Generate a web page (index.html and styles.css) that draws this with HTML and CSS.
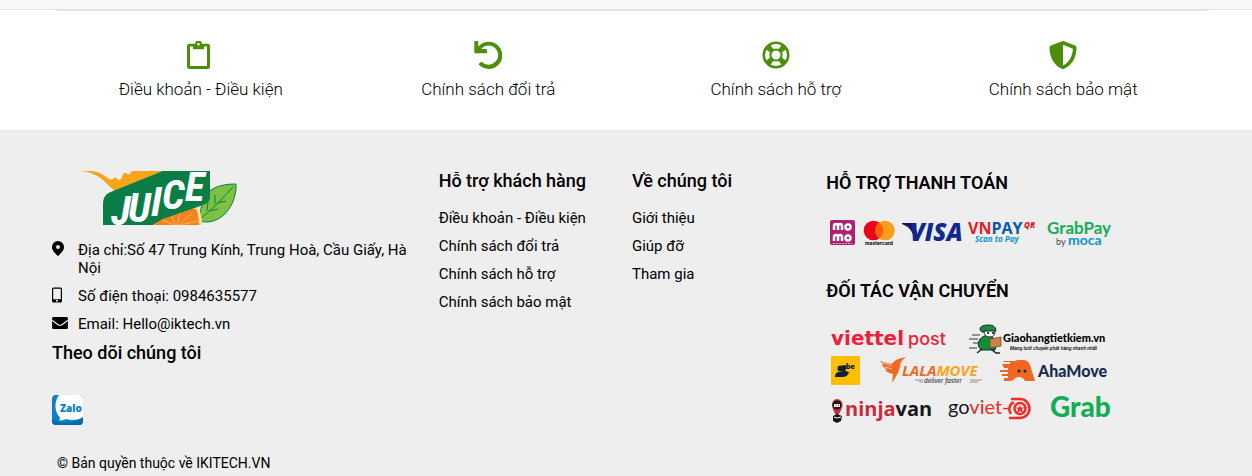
FILE: index.html
```html
<!DOCTYPE html>
<html lang="vi">
<head>
<meta charset="utf-8">
<meta name="viewport" content="width=device-width, initial-scale=1">
<title>Juice</title>
<link rel="stylesheet" href="styles.css">
</head>
<body>
<div class="page-end"></div>
<section class="policies">
  <div class="policy-list">
    <a class="policy" href="#terms">
      <svg class="policy-icon" viewBox="0 0 28 28" aria-hidden="true"><path fill-rule="evenodd" d="M2.500 2.800H8.200a3.300 3.300 0 0 1 6.600 0h5.700A2.500 2.500 0 0 1 23 5.300v20.200a2.500 2.500 0 0 1-2.500 2.500h-18A2.500 2.500 0 0 1 0 25.500V5.300a2.500 2.500 0 0 1 2.500-2.500ZM3 5.600V25h17V5.600h-3v1.900a.8.800 0 0 1-.8.800H6.800a.8.800 0 0 1-.8-.8V5.600ZM11.500 1.900a1.300 1.300 0 1 0 0 2.600 1.300 1.300 0 0 0 0-2.600Z"/></svg>
      <span>Điều khoản - Điều kiện</span>
    </a>
    <a class="policy" href="#returns">
      <svg class="policy-icon" viewBox="0 0 28 28" aria-hidden="true"><path d="M1 0h2.600a.7.700 0 0 1 .7.700v4.900A13.600 13.600 0 1 1 5 23.800a.7.700 0 0 1 0-1l1.900-1.900a.7.700 0 0 1 .9 0A9.600 9.600 0 1 0 7.100 8h5.200a.7.700 0 0 1 .7.700v2.900a.7.700 0 0 1-.7.700H1a.7.700 0 0 1-.7-.7V.7A.7.700 0 0 1 1 0Z"/></svg>
      <span>Chính sách đổi trả</span>
    </a>
    <a class="policy" href="#support">
      <svg class="policy-icon" viewBox="0 0 28 28" aria-hidden="true"><path fill-rule="evenodd" d="M14 .5a13.500 13.500 0 1 0 0 27 13.500 13.500 0 0 0 0-27ZM8.700 4.500a11 11 0 0 1 10.600 0l-2.600 3.400a8 8 0 0 0-5.400 0ZM4.500 8.700l3.400 2.600a8 8 0 0 0 0 5.400l-3.400 2.600a11 11 0 0 1 0-10.600ZM8.700 23.500l2.600-3.400a8 8 0 0 0 5.400 0l2.600 3.400a11 11 0 0 1-10.600 0ZM23.500 19.300l-3.400-2.600a8 8 0 0 0 0-5.400l3.400-2.600a11 11 0 0 1 0 10.600ZM14 9.500a4.500 4.500 0 1 1 0 9 4.500 4.500 0 0 1 0-9Z"/></svg>
      <span>Chính sách hỗ trợ</span>
    </a>
    <a class="policy" href="#privacy">
      <svg class="policy-icon" viewBox="0 0 28 28" aria-hidden="true"><path fill-rule="evenodd" d="M13 .2a2.600 2.600 0 0 1 2 0l11 4.400c1 .4 1.600 1.300 1.500 2.400 0 9.500-4.600 17.600-12.400 20.800a3 3 0 0 1-2.200 0C5.200 24.700.6 16.200.5 7 .5 5.900 1.100 5 2 4.600ZM14 3.800v20.600c5.900-2.800 9.600-9.100 9.900-16.600Z"/></svg>
      <span>Chính sách bảo mật</span>
    </a>
  </div>
</section>

<footer class="footer">
  <div class="footer-grid">
    <section class="company">
      <svg class="brand" viewBox="0 0 160 54" role="img" aria-label="Juice">
        <path fill="#f8a51b" d="M0 0c12 1 20 5 27 13l10 9L84 0H53c-2 0-3 5-6 3-3-3-4 0-6 5-3 3-5-3-7-1-3 3-5 1-9-2C19 1 14 0 10 0Z"/>
        <path fill="#7cc142" stroke="#0a8043" d="M119 50c3-16 1-37 37-37 1 21-15 43-37 37Z"/>
        <path fill="none" stroke="#0a8043" d="M118 49c12-8 22-19 35-33M127 40l1-9M135 33l0-9M129 40l9-2M137 32l9-2"/>
        <path fill="#f9e597" d="M70 54c8-12 31-21 48-18q4 7 4 18Z"/>
        <path fill="#f58220" d="M74 54c9-12 26-18 42-16q3 7 3 16Z"/>
        <path fill="none" stroke="#fcb64c" d="M94 54l-14-6M95 54l-4-12M97 54l4-15M99 54l13-12M100 54l18-4"/>
        <path fill="#0a7d47" d="M23 54V35c0-9 2-12 10-15L83 0h47v25c0 5-2 7-7 9L83 48q-6 3-10 6Z"/>
        <g class="brand-word"><text x="31" y="54">J</text><text x="48" y="51">U</text><text x="71" y="45">I</text><text x="82" y="38">C</text><text x="105" y="30">E</text></g>
      </svg>
      <ul class="contacts">
        <li><svg class="contact-icon" viewBox="0 0 16 16" aria-hidden="true"><path fill-rule="evenodd" d="M6 0a6 6 0 0 1 6 6c0 3-1.300 4-5.300 8.600a.9.900 0 0 1-1.400 0C1.300 10 0 9 0 6a6 6 0 0 1 6-6Zm0 4a2 2 0 1 0 0 4 2 2 0 0 0 0-4Z"/></svg><span>Địa chỉ:Số 47 Trung Kính, Trung Hoà, Cầu Giấy, Hà Nội</span></li>
        <li><svg class="contact-icon" viewBox="0 0 16 16" aria-hidden="true"><path fill-rule="evenodd" d="M1.500.5h7A1.500 1.500 0 0 1 10 2v12a1.500 1.500 0 0 1-1.500 1.500h-7A1.500 1.500 0 0 1 0 14V2A1.500 1.500 0 0 1 1.500.5Zm-.3 1.200v10.500h7.600V1.700ZM5 12.800a1 1 0 1 0 0 2 1 1 0 0 0 0-2Z"/></svg><span>Số điện thoại: 0984635577</span></li>
        <li><svg class="contact-icon" viewBox="0 0 16 16" aria-hidden="true"><path d="M1.500 2h13A1.500 1.500 0 0 1 16 3.500v1L9.500 9.300q-1.500 1-3 0L0 4.500v-1A1.500 1.500 0 0 1 1.500 2ZM0 6l5.800 4.300q2.200 1.400 4.400 0L16 6v6.500a1.500 1.500 0 0 1-1.500 1.500h-13A1.500 1.500 0 0 1 0 12.500Z"/></svg><span>Email: Hello@iktech.vn</span></li>
      </ul>
      <h2 class="title">Theo dõi chúng tôi</h2>
      <a class="zalo" href="#zalo" aria-label="Zalo">
        <svg viewBox="0 0 31 30" aria-hidden="true">
          <rect width="31" height="30" rx="4" fill="#0a80c8"/>
          <path fill="#056cad" d="M0 24c10 6 22 5 31-2v4a4 4 0 0 1-4 4H4a4 4 0 0 1-4-4Z"/>
          <path fill="#fff" d="M7 0C3 5 2 14 6 20c2 3 3 3 1 5 3 1 5 0 7-1 7 2 13 1 17-2V4a4 4 0 0 0-4-4Z"/>
          <text class="zalo-word" x="8" y="17">Zalo</text>
        </svg>
      </a>
    </section>

    <nav class="links" aria-labelledby="help-title">
      <h2 class="title" id="help-title">Hỗ trợ khách hàng</h2>
      <ul>
        <li><a href="#terms">Điều khoản - Điều kiện</a></li>
        <li><a href="#returns">Chính sách đổi trả</a></li>
        <li><a href="#support">Chính sách hỗ trợ</a></li>
        <li><a href="#privacy">Chính sách bảo mật</a></li>
      </ul>
    </nav>

    <nav class="links" aria-labelledby="about-title">
      <h2 class="title" id="about-title">Về chúng tôi</h2>
      <ul>
        <li><a href="#intro">Giới thiệu</a></li>
        <li><a href="#help">Giúp đỡ</a></li>
        <li><a href="#join">Tham gia</a></li>
      </ul>
    </nav>

    <section class="partners">
      <h2 class="title partner-title">HỖ TRỢ THANH TOÁN</h2>
      <svg class="partner-logos" viewBox="0 0 290 45" role="img" aria-label="MoMo, Mastercard, Visa, VNPAY QR, GrabPay by Moca">
        <rect x="4" y="10" width="25" height="25" rx="2" fill="#ae2070"/>
        <g fill="none" stroke="#fff" stroke-width="2.500"><path d="M8 20v-4q0-2 2-2t2 2v4m0-4q0-2 2-2t2 2v4M8 31v-4q0-2 2-2t2 2v4m0-4q0-2 2-2t2 2v4"/><circle cx="22" cy="17" r="2.500"/><circle cx="22" cy="28" r="2.500"/></g>
        <path stroke="#e5a9cb" stroke-dasharray="2 1" d="M7 33.500h19"/>
        <circle cx="47.500" cy="20.500" r="9.800" fill="#eb001b"/><circle cx="59" cy="20.500" r="9.800" fill="#f79e1b"/><path fill="#ff5f00" d="M53.200 12.600a9.800 9.800 0 0 1 0 15.800 9.800 9.800 0 0 1 0-15.800Z"/>
        <text class="lg-mastercard" x="39" y="35">mastercard</text>
        <path fill="#15195a" d="M76 13h9q3 0 4 3l3 10-3 5q-2-13-13-17Z"/>
        <text class="lg-visa" x="84" y="31">VISA</text>
        <text class="lg-vnpay" x="142" y="24"><tspan fill="#e31e2b">VN</tspan><tspan fill="#075ba8">PAY</tspan></text>
        <text class="lg-qr" x="198" y="18">QR</text>
        <text class="lg-scan" x="149" y="32">Scan to Pay</text>
        <text class="lg-grabpay" x="221" y="24">GrabPay</text>
        <text class="lg-by" x="230" y="35">by</text><text class="lg-moca" x="242" y="35">moca</text>
      </svg>
      <h2 class="title partner-title">ĐỐI TÁC VẬN CHUYỂN</h2>
      <svg class="partner-logos" viewBox="0 0 290 110" role="img" aria-label="Viettel Post, Giaohangtietkiem.vn, be, Lalamove, AhaMove, Ninja Van, Go-Viet, Grab">
        <text class="lg-viettel" x="5" y="25">viettel</text><text class="lg-post" x="82" y="25">post</text>

        <g><path stroke="#333" stroke-width="1" d="M146 15h8M143 19h9M147 23h7M143 28h8"/>
        <path fill="#168a3f" stroke="#173222" d="M154 10q-1-5 9-5 6 0 7 5l-1 2h-13Zm0 9q6-6 12-2l5 5-2 8h-14q-5-5-1-11Z"/>
        <path fill="#fff" stroke="#222" d="M158 11h11q0 6-5 6-6 0-6-6Z"/><path fill="#c78549" stroke="#69401f" stroke-width=".7" d="m164 19 11-2v9l-11 2Z"/><path fill="none" stroke="#222" stroke-width="1.500" d="M156 29l-5 4M165 29l5 4h4"/><circle cx="162" cy="13" r="1"/><circle cx="167" cy="13" r="1"/></g>
        <text class="lg-ghtk" x="177" y="22">Giaohangtietkiem.vn</text><text class="lg-tag" x="184" y="30">Mang lưới chuyển phát hàng nhanh nhất</text>

        <path fill="#ffbe00" d="M5 36h29v29H5z"/><path fill="#111f3c" d="m12 46 8-1q1 4-1 6l4 1q-1 5-7 5H9q0-4 3-5l5-1h-5q-1-2 0-5Z"/><text class="lg-be" x="20" y="49">be</text>
        <path fill="#f26722" d="M54 41q10 3 12 3 2-5 14-7-6 4-6 10-1 5-8 16l1-9q-8-2-8-5 1 1 3 1-6-3-6-6l4 2q-5-3-6-5Z"/>
        <path stroke="#eee" stroke-width=".7" d="M56 42l10 4M59 47l7 2"/>
        <text class="lg-lala" x="76" y="56"><tspan fill="#f26722">LALA</tspan><tspan fill="#f9a51a">MOVE</tspan></text>
        <path stroke="#777" stroke-width=".8" d="M89 60h8M144 60h12M93 62h4M144 62h8"/><text class="lg-deliver" x="98" y="63">deliver faster</text>
        <path fill="#f26522" d="M178 41h11q2-1 4-1h4q5 0 7 5l5 16h-10q-2-4-6-4-3 0-5 2-1 2-4 2h-6v-3h4v-2h-6v-2h6v-2h-8v-2h8v-2h-4l-2-4h8v-2h-7Z"/><circle cx="193" cy="51" r="1.500" fill="#162b4d"/><circle cx="199" cy="51" r="1.500" fill="#162b4d"/>
        <text class="lg-aha" x="212" y="57">AhaMove</text>

        <path fill="#c92b3d" d="M11 79a5.500 5.500 0 0 1 5.500 6q0 4-5.500 12-5-8-5-12a5.500 5.500 0 0 1 5-6Z"/><circle cx="11" cy="85" r="4.500" fill="#17181a"/><path fill="#fff" d="M8 84h6v3H8z"/><circle cx="10" cy="85" r=".6"/><circle cx="12.500" cy="85" r=".6"/><path fill="#17181a" d="m7 96 4-2 5 2-1 5-4 2-4-2Z"/><path stroke="#fff" d="m8 97 3 1 4-1"/>
        <text class="lg-ninja" x="19" y="96"><tspan fill="#c92b3d">ninja</tspan><tspan fill="#17181a">van</tspan></text>
        <text class="lg-viet" x="122" y="94"><tspan fill="#17181a">go</tspan><tspan fill="#f12b25">viet-</tspan></text>
        <g fill="none" stroke="#f12b25" stroke-width="2.500"><path d="M185 79h9a9.500 9.500 0 0 1 0 19h-11M188 83h-2q-5 5-1 11"/><circle cx="194" cy="88.500" r="5.500"/></g><path fill="#f12b25" d="m194 85 1 2.500h3l-2 2 1 3-3-1.500-3 1.500 1-3-2-2h3Z"/>
        <text class="lg-grab" x="224" y="97">Grab</text>
      </svg>
    </section>
  </div>
  <p class="copyright">© Bản quyền thuộc về IKITECH.VN</p>
</footer>
</body>
</html>
```
FILE: styles.css
```css
* { box-sizing: border-box; }
body { margin: 0; background: #eee; color: #000; font: 15px/18px Roboto, "Noto Sans", sans-serif; }
a { color: inherit; text-decoration: none; }
ul { list-style: none; margin: 0; padding: 0; }
svg { display: block; }

.page-end { height: 10px; background: #f6f7f9; border-bottom: 1px solid #e2e3e5; }

.policies { background: #fff; padding: 0 45px 0 57px; border-bottom: 1px solid #e2e3e5; }
.policy-list { display: grid; grid-template-columns: repeat(4, 1fr); padding: 30px 0; border-top: 1px solid #e2e3e5; }
.policy { display: flex; flex-direction: column; align-items: center; gap: 9px; font-size: 17px; font-weight: 300; line-height: 22px; }
.policy-icon { width: 28px; height: 28px; fill: #4b8f0a; }

.footer { background: #eee; padding: 40px 40px 4px 52px; }
.footer-grid { display: grid; grid-template-columns: 2fr 1fr 1fr 2fr; }
.title { margin: 0; font-size: 18px; font-weight: 500; line-height: 20px; }

.brand { width: 160px; height: 54px; margin-left: 28px; overflow: visible; }
.brand-word text { font: italic 700 41px "Roboto Condensed", "Liberation Sans Narrow", "DejaVu Sans Condensed", sans-serif; fill: #fff; }
.contacts { display: grid; gap: 10px; margin: 16px 0 10px; padding-right: 20px; }
.contacts li { display: grid; grid-template-columns: 16px 1fr; gap: 10px; }
.contact-icon { width: 16px; height: 16px; }
.zalo { display: block; width: 31px; margin-top: 32px; }
.zalo-word { font: 800 10px "Open Sans", sans-serif; fill: #0a80c8; }

.links ul { display: grid; gap: 10px; margin-top: 18px; }

.partners { padding-left: 1px; }
.partner-title { padding-top: 2px; font-weight: 600; }
.partner-logos { width: 290px; margin: 17px 0 24px; }
.partner-logos:last-child { margin: 19px 0 24px; }
.copyright { margin: 0; padding: 0 5px; font-size: 14px; }

.lg-mastercard { font: 700 5px Inter, sans-serif; }
.lg-visa { font: italic 800 24px "Open Sans", sans-serif; fill: #10298e; }
.lg-vnpay { font: 700 16px "Open Sans", sans-serif; }
.lg-qr { font: italic 800 8px "Open Sans", sans-serif; fill: #e31e2b; }
.lg-scan { font: italic 700 8px "Open Sans", sans-serif; fill: #0795d4; }
.lg-grabpay { font: 700 17px Lato, sans-serif; fill: #12ad55; }
.lg-by { font: 400 9px Lato, sans-serif; fill: #444; }
.lg-moca { font: 700 14px Lato, sans-serif; fill: #0795d4; }
.lg-viettel { font: 700 20px "DejaVu Sans", sans-serif; fill: #ee1d38; }
.lg-post { font: 500 18px Inter, sans-serif; fill: #ee1d38; }
.lg-ghtk { font: 900 11px Lato, sans-serif; }
.lg-tag { font: italic 500 5px Roboto, sans-serif; }
.lg-be { font: 900 7px Inter, sans-serif; fill: #111f3c; }
.lg-lala { font: italic 700 15px "Open Sans", sans-serif; }
.lg-deliver { font: italic 500 6px Inter, sans-serif; fill: #333; }
.lg-aha { font: 900 16px Lato, sans-serif; fill: #162b4d; }
.lg-ninja { font: 700 20px "Open Sans", sans-serif; }
.lg-viet { font: 400 20px Lato, sans-serif; }
.lg-grab { font: 900 28px Lato, sans-serif; fill: #12ad55; }
```
